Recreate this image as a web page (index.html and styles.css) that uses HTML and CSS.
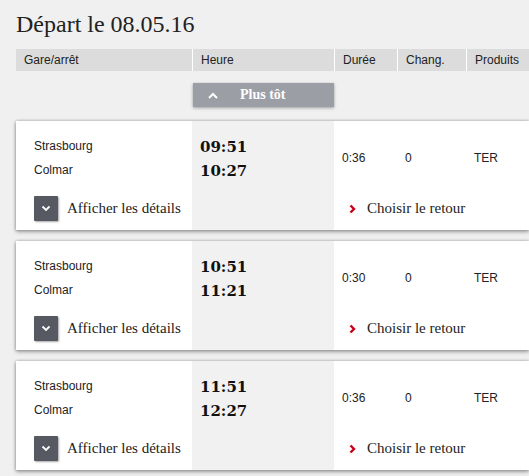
FILE: index.html
```html
<!DOCTYPE html>
<html lang="fr">
<head>
<meta charset="utf-8">
<title>Départ le 08.05.16</title>
<link rel="stylesheet" href="styles.css">
</head>
<body>
<div class="page">
  <h1 class="title">Départ le 08.05.16</h1>
  <div class="thead">
    <div class="th th-station">Gare/arrêt</div>
    <div class="th th-time">Heure</div>
    <div class="th th-dur">Durée</div>
    <div class="th th-chg">Chang.</div>
    <div class="th th-prod">Produits</div>
  </div>
  <div class="earlier-row">
    <button class="earlier">
      <svg class="ico-up" width="10" height="7" viewBox="0 0 10 7"><polyline points="1,6 5,2 9,6" fill="none" stroke="#fff" stroke-width="2"/></svg>
      <span>Plus tôt</span>
    </button>
  </div>

  <div class="card">
    <div class="c-left">
      <div class="stations"><div>Strasbourg</div><div>Colmar</div></div>
      <div class="details"><span class="dbtn"><svg width="10" height="7" viewBox="0 0 10 7"><polyline points="1.5,1.5 5,5 8.5,1.5" fill="none" stroke="#fff" stroke-width="1.8"/></svg></span><span class="dlabel">Afficher les détails</span></div>
    </div>
    <div class="c-time"><div>09:51</div><div>10:27</div></div>
    <div class="c-right">
      <div class="info"><span class="i-dur">0:36</span><span class="i-chg">0</span><span class="i-prod">TER</span></div>
      <div class="choose"><svg width="7" height="10" viewBox="0 0 7 10"><polyline points="1.5,1.5 5,5 1.5,8.5" fill="none" stroke="#c8001a" stroke-width="2.4"/></svg><span>Choisir le retour</span></div>
    </div>
  </div>

  <div class="card">
    <div class="c-left">
      <div class="stations"><div>Strasbourg</div><div>Colmar</div></div>
      <div class="details"><span class="dbtn"><svg width="10" height="7" viewBox="0 0 10 7"><polyline points="1.5,1.5 5,5 8.5,1.5" fill="none" stroke="#fff" stroke-width="1.8"/></svg></span><span class="dlabel">Afficher les détails</span></div>
    </div>
    <div class="c-time"><div>10:51</div><div>11:21</div></div>
    <div class="c-right">
      <div class="info"><span class="i-dur">0:30</span><span class="i-chg">0</span><span class="i-prod">TER</span></div>
      <div class="choose"><svg width="7" height="10" viewBox="0 0 7 10"><polyline points="1.5,1.5 5,5 1.5,8.5" fill="none" stroke="#c8001a" stroke-width="2.4"/></svg><span>Choisir le retour</span></div>
    </div>
  </div>

  <div class="card">
    <div class="c-left">
      <div class="stations"><div>Strasbourg</div><div>Colmar</div></div>
      <div class="details"><span class="dbtn"><svg width="10" height="7" viewBox="0 0 10 7"><polyline points="1.5,1.5 5,5 8.5,1.5" fill="none" stroke="#fff" stroke-width="1.8"/></svg></span><span class="dlabel">Afficher les détails</span></div>
    </div>
    <div class="c-time"><div>11:51</div><div>12:27</div></div>
    <div class="c-right">
      <div class="info"><span class="i-dur">0:36</span><span class="i-chg">0</span><span class="i-prod">TER</span></div>
      <div class="choose"><svg width="7" height="10" viewBox="0 0 7 10"><polyline points="1.5,1.5 5,5 1.5,8.5" fill="none" stroke="#c8001a" stroke-width="2.4"/></svg><span>Choisir le retour</span></div>
    </div>
  </div>
</div>
</body>
</html>
```
FILE: styles.css
```css
html, body {
  margin: 0;
  padding: 0;
  overflow: hidden;
  background: #f0f0f0;
}
body {
  font-family: "Liberation Sans", Arial, sans-serif;
  color: #222;
}
.page {
  padding: 0 0 0 16px;
}
.title {
  margin: 10px 0 11px 0;
  font-family: "Liberation Serif", "Times New Roman", serif;
  font-weight: normal;
  font-size: 24px;
  line-height: 28px;
  color: #222;
}
.thead {
  display: flex;
  height: 22px;
  background: #dcdcdc;
  font-size: 12px;
  line-height: 22px;
  color: #222;
}
.th {
  padding-left: 8px;
  box-sizing: border-box;
}
.th + .th { border-left: 1px solid #fff; }
.th-station { width: 176px; }
.th-time { width: 142px; }
.th-dur { width: 63px; }
.th-chg { width: 69px; }
.th-prod { flex: 1; }

.earlier-row {
  padding-left: 177px;
  margin-top: 12px;
  height: 24px;
  margin-bottom: 14px;
}
.earlier {
  display: flex;
  align-items: center;
  width: 141px;
  height: 24px;
  border: 0;
  padding: 0 0 0 15px;
  background: #9c9ea5;
  box-shadow: 0 1px 3px rgba(0,0,0,0.35);
  color: #fff;
  font-family: "Liberation Serif", "Times New Roman", serif;
  font-weight: bold;
  font-size: 14px;
}
.ico-up { margin-right: 22px; }

.card {
  display: flex;
  height: 109px;
  background: #fff;
  margin-bottom: 11px;
  box-shadow: 0 0 3px rgba(0,0,0,0.3), 0 2px 4px rgba(0,0,0,0.3);
}
.c-left {
  width: 176px;
  padding: 13px 0 0 18px;
  box-sizing: border-box;
  font-size: 12px;
}
.stations { line-height: 24px; }
.details {
  display: flex;
  align-items: center;
  margin-top: 14px;
  height: 25px;
}
.dbtn {
  display: flex;
  align-items: center;
  justify-content: center;
  width: 24px;
  height: 25px;
  background: #565862;
  border-radius: 1px;
  box-shadow: 1px 1px 2px rgba(0,0,0,0.35);
}
.dlabel {
  margin-left: 9px;
  font-family: "Liberation Serif", "Times New Roman", serif;
  font-size: 15px;
  color: #222;
}
.c-time {
  width: 142px;
  background: #f1f1f1;
  padding: 14px 0 0 8px;
  box-sizing: border-box;
  font-family: "DejaVu Serif", serif;
  font-weight: bold;
  font-size: 15px;
  line-height: 24px;
  color: #111;
}
.c-right {
  flex: 1;
  font-size: 12px;
}
.info {
  display: flex;
  padding-top: 25px;
  line-height: 24px;
}
.info span { padding-left: 8px; box-sizing: border-box; }
.i-dur { width: 63px; }
.i-chg { width: 69px; }
.choose {
  display: flex;
  align-items: center;
  margin-top: 26px;
  height: 25px;
  padding-left: 15px;
  font-family: "Liberation Serif", "Times New Roman", serif;
  font-size: 15px;
  color: #222;
}
.choose svg { margin-right: 11px; }
```
